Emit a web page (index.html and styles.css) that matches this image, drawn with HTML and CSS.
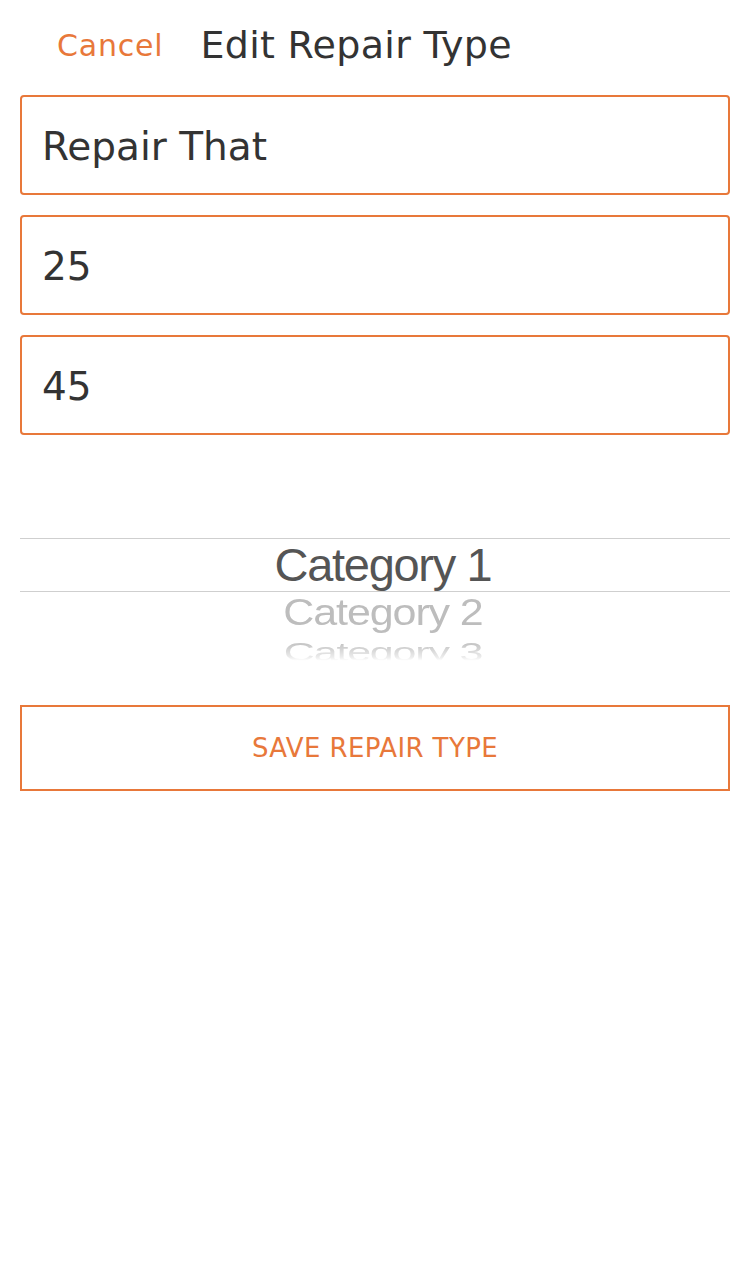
FILE: index.html
```html
<!DOCTYPE html>
<html>
<head>
<meta charset="utf-8">
<link rel="stylesheet" href="styles.css">
</head>
<body>
<div class="page">
  <header class="topbar">
    <span class="cancel">Cancel</span>
    <h1 class="title">Edit Repair Type</h1>
  </header>
  <main class="form">
    <div class="field">Repair That</div>
    <div class="field">25</div>
    <div class="field">45</div>
    <div class="picker">
      <div class="band"><span class="opt opt-sel">Category 1</span></div>
      <div class="opt opt-2">Category 2</div>
      <div class="opt opt-3">Category 3</div>
    </div>
    <button class="save">SAVE REPAIR TYPE</button>
  </main>
</div>
</body>
</html>
```
FILE: styles.css
```css
* { box-sizing: border-box; }
html, body { margin: 0; padding: 0; background: #fff; }
body { font-family: "DejaVu Sans", "Open Sans", sans-serif; color: #333; }
.page { width: 750px; }
.topbar {
  height: 95px;
  display: flex;
  align-items: center;
  padding: 0 0 5px 57px;
  gap: 37px;
}
.cancel { font-size: 30px; color: #e8783a; letter-spacing: 0.8px; }
.title { margin: 0; font-size: 38px; font-weight: 400; color: #333; letter-spacing: 0.3px; }
.form {
  padding: 0 20px;
  display: flex;
  flex-direction: column;
  gap: 20px;
}
.field {
  height: 100px;
  border: 2px solid #e8783a;
  border-radius: 4px;
  padding: 3px 20px 0;
  display: flex;
  align-items: center;
  font-size: 39px;
  color: #333;
}
.picker {
  margin-top: 83px;
  padding-left: 16px;
  display: flex;
  flex-direction: column;
  align-items: stretch;
  font-family: "Liberation Sans", Arial, sans-serif;
}
.band {
  height: 54px;
  margin-left: -16px;
  padding-left: 16px;
  border-top: 1px solid #cfcfcf;
  border-bottom: 1px solid #cfcfcf;
  display: flex;
  justify-content: center;
  overflow: visible;
}
.opt { display: block; text-align: center; white-space: nowrap; }
.opt-sel {
  font-size: 47px;
  line-height: 52px;
  letter-spacing: -1.3px;
  color: #555;
}
.opt-2 {
  height: 40px;
  font-size: 43px;
  line-height: 40px;
  letter-spacing: -1.1px;
  color: #bdbdbd;
  transform: scaleY(0.88);
}
.opt-3 {
  height: 40px;
  font-size: 43px;
  line-height: 40px;
  letter-spacing: -1.2px;
  color: #bdbdbd;
  transform: scaleY(0.62);
  -webkit-mask-image: linear-gradient(to bottom, rgba(0,0,0,0.85) 20%, rgba(0,0,0,0.3) 70%, transparent 85%);
  mask-image: linear-gradient(to bottom, rgba(0,0,0,0.85) 20%, rgba(0,0,0,0.3) 70%, transparent 85%);
}
.save {
  margin-top: 13px;
  height: 86px;
  border: 2px solid #e8783a;
  background: #fff;
  border-radius: 0;
  font-family: "DejaVu Sans", "Open Sans", sans-serif;
  font-size: 26px;
  letter-spacing: 0.4px;
  color: #e8783a;
  cursor: pointer;
}
```
